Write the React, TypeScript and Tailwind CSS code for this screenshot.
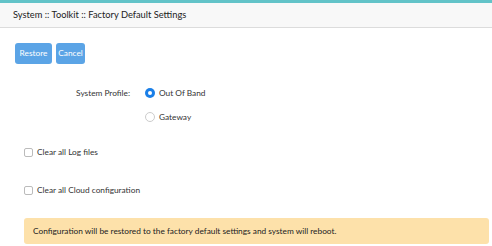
export default function App() {
  return (
    <div className="w-[492px] h-[246px] bg-white overflow-hidden text-[#333] font-['Lato',sans-serif]">
      <div className="h-[28px] border-t-[3px] border-[#62c3c8] bg-[#f8f8f8] border-b border-b-[#dcdcdc] flex items-center pl-[13px] text-[9.3px] text-[#222]">
        System :: Toolkit :: Factory Default Settings
      </div>

      <div className="flex gap-[4px] pl-[15px] pt-[15px]">
        <button className="h-[21px] w-[37px] rounded-[3px] bg-[#5ba4e6] text-white text-[8.3px]">Restore</button>
        <button className="h-[21px] w-[29px] rounded-[3px] bg-[#5ba4e6] text-white text-[8.3px]">Cancel</button>
      </div>

      <div className="flex mt-[20px] text-[8.3px]">
        <div className="w-[130px] text-right h-[12px] leading-[12px] mt-[3px]">System Profile:</div>
        <div className="flex flex-col pl-[15px] gap-[12px]">
          <label className="flex items-center gap-[4px] h-[12px] mt-[3px]">
            <span className="w-[10px] h-[10px] rounded-full bg-[#1a7fe8] flex items-center justify-center">
              <span className="w-[4px] h-[4px] rounded-full bg-white" />
            </span>
            Out Of Band
          </label>
          <label className="flex items-center gap-[4px] h-[12px]">
            <span className="w-[10px] h-[10px] rounded-full border border-[#ccc] bg-white" />
            Gateway
          </label>
        </div>
      </div>

      <div className="flex flex-col gap-[26px] pl-[24px] mt-[23px] text-[8.3px]">
        <label className="flex items-center gap-[4px] h-[12px]">
          <span className="w-[9px] h-[9px] rounded-[2px] border border-[#bbb] bg-white" />
          Clear all Log files
        </label>
        <label className="flex items-center gap-[4px] h-[12px]">
          <span className="w-[9px] h-[9px] rounded-[2px] border border-[#bbb] bg-white" />
          Clear all Cloud configuration
        </label>
      </div>

      <div className="ml-[24px] mr-[3px] mt-[22px] h-[26px] rounded-[3px] bg-[#fde1aa] flex items-center pl-[9px] text-[8.3px] text-[#222]">
        Configuration will be restored to the factory default settings and system will reboot.
      </div>
    </div>
  );
}
